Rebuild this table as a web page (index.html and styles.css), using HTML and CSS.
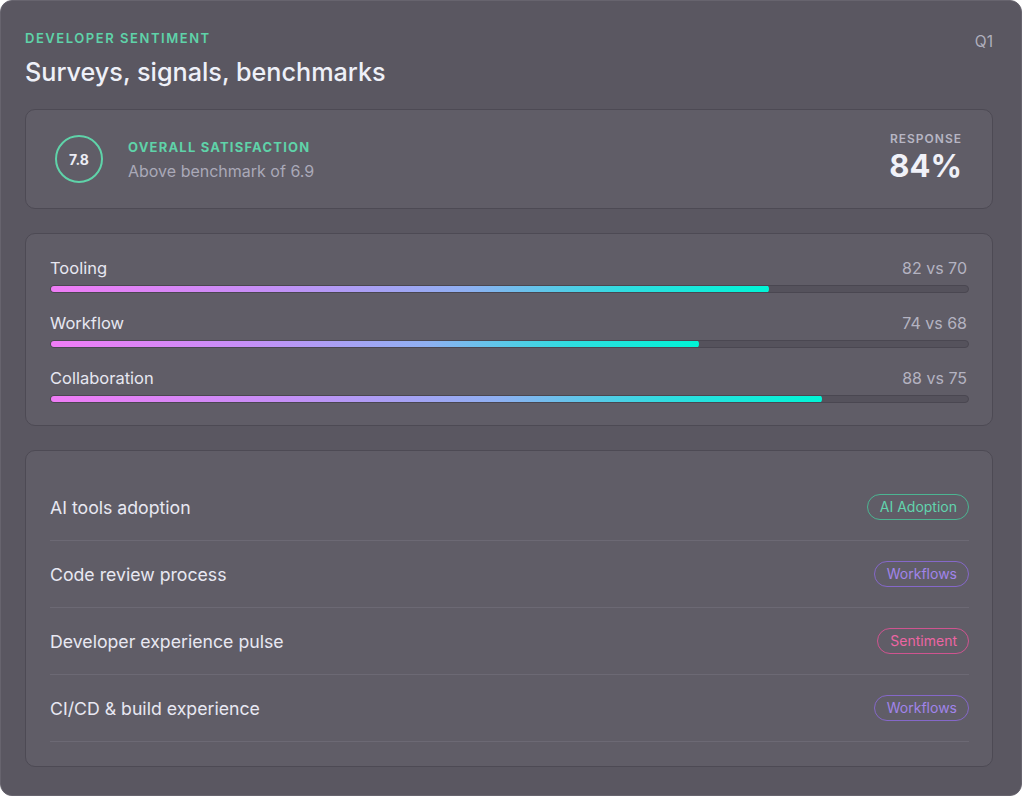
FILE: index.html
```html
<!DOCTYPE html>
<html lang="en">
<head>
<meta charset="utf-8">
<title>Developer Sentiment</title>
<link rel="stylesheet" href="styles.css">
</head>
<body>
<div class="panel">
  <header class="panel-head">
    <div>
      <div class="eyebrow">Developer Sentiment</div>
      <h1 class="title">Surveys, signals, benchmarks</h1>
    </div>
    <div class="period">Q1</div>
  </header>

  <section class="card summary">
    <div class="score">7.8</div>
    <div class="summary-text">
      <div class="summary-label">Overall Satisfaction</div>
      <div class="summary-sub">Above benchmark of 6.9</div>
    </div>
    <div class="response">
      <div class="response-label">Response</div>
      <div class="response-value">84%</div>
    </div>
  </section>

  <section class="card bars">
    <div class="bar-row">
      <div class="bar-head"><span class="bar-name">Tooling</span><span class="bar-val">82 vs 70</span></div>
      <div class="track"><div class="fill" style="width:78.4%"></div></div>
    </div>
    <div class="bar-row">
      <div class="bar-head"><span class="bar-name">Workflow</span><span class="bar-val">74 vs 68</span></div>
      <div class="track"><div class="fill" style="width:70.8%"></div></div>
    </div>
    <div class="bar-row">
      <div class="bar-head"><span class="bar-name">Collaboration</span><span class="bar-val">88 vs 75</span></div>
      <div class="track"><div class="fill" style="width:84.2%"></div></div>
    </div>
  </section>

  <section class="card list">
    <div class="list-row"><span class="list-name">AI tools adoption</span><span class="tag tag-teal">AI Adoption</span></div>
    <div class="list-row"><span class="list-name">Code review process</span><span class="tag tag-purple">Workflows</span></div>
    <div class="list-row"><span class="list-name">Developer experience pulse</span><span class="tag tag-pink">Sentiment</span></div>
    <div class="list-row"><span class="list-name">CI/CD &amp; build experience</span><span class="tag tag-purple">Workflows</span></div>
  </section>
</div>
</body>
</html>
```

FILE: styles.css
```css
* { box-sizing: border-box; }
html, body { margin: 0; padding: 0; background: #ffffff; }
body {
  font-family: Inter, "Noto Sans", "Liberation Sans", sans-serif;
  color: #e9e9f2;
}
.panel {
  width: 1022px;
  height: 796px;
  background: #5a5761;
  border: 1px solid #67646e;
  border-radius: 12px;
  padding: 29px 28px 0 24px;
  display: flex;
  flex-direction: column;
}
.panel-head {
  display: flex;
  justify-content: space-between;
  align-items: flex-start;
  margin-bottom: 22px;
}
.eyebrow {
  font-size: 13px;
  line-height: 16px;
  font-weight: 600;
  letter-spacing: 1.55px;
  text-transform: uppercase;
  color: #5fd3a9;
}
.title {
  margin: 11px 0 0;
  font-size: 25.2px;
  line-height: 30px;
  font-weight: 500;
  color: #eef0f8;
}
.period {
  font-size: 15.5px;
  line-height: 18px;
  color: #b0afbd;
  margin-top: 3px;
}
.card {
  background: #605d67;
  border: 1px solid #4d4a54;
  border-radius: 10px;
}
.summary {
  height: 100px;
  display: flex;
  align-items: center;
  padding: 0 30px 0 29px;
  margin-bottom: 24px;
}
.score {
  width: 48px;
  height: 48px;
  border-radius: 50%;
  border: 2px solid #5fd3a9;
  display: flex;
  align-items: center;
  justify-content: center;
  font-size: 14px;
  font-weight: 700;
  color: #ececf4;
  flex: none;
}
.summary-text {
  margin-left: 25px;
  margin-top: 2px;
  flex: 1;
}
.summary-label {
  font-size: 13px;
  line-height: 16px;
  font-weight: 700;
  letter-spacing: 1.2px;
  text-transform: uppercase;
  color: #5fd3a9;
}
.summary-sub {
  margin-top: 7px;
  font-size: 16px;
  line-height: 19px;
  color: #aaa9b8;
}
.response {
  text-align: right;
  margin-top: -2px;
}
.response-label {
  font-size: 12px;
  line-height: 14px;
  font-weight: 600;
  letter-spacing: 1px;
  text-transform: uppercase;
  color: #b7b6c4;
}
.response-value {
  margin-top: 2px;
  font-size: 31px;
  line-height: 36px;
  font-weight: 700;
  color: #f0f1f8;
}
.bars {
  padding: 24px 23px 22px 24px;
  display: flex;
  flex-direction: column;
  gap: 20px;
  margin-bottom: 24px;
}
.bar-head {
  display: flex;
  justify-content: space-between;
  align-items: center;
  height: 20px;
  margin-bottom: 7px;
  padding-right: 2px;
}
.bar-name {
  font-size: 16.5px;
  color: #e7e7f1;
}
.bar-val {
  font-size: 16px;
  color: #b4b3c1;
}
.track {
  height: 8px;
  border-radius: 4px;
  background: #55525c;
  border: 1px solid #4a4751;
  overflow: hidden;
}
.fill {
  margin: -1px 0 0 -1px;
  height: 8px;
  border-radius: 4px;
  background: linear-gradient(90deg, #f07cf6 0%, #c68ff7 30%, #8fb0f2 58%, #2fdde0 80%, #00f5d6 100%);
}
.list {
  padding: 23px 23px 0 24px;
  height: 317px;
}
.list-row {
  height: 67px;
  display: flex;
  align-items: center;
  justify-content: space-between;
  border-bottom: 1px solid #6c6974;
}
.list-name {
  font-size: 17.7px;
  color: #e8e8f2;
}
.tag {
  height: 26px;
  padding: 0 11px 0 12px;
  border-radius: 13px;
  border: 1.5px solid;
  font-size: 14px;
  line-height: 23px;
  font-weight: 400;
}
.tag-teal { color: #62d4ad; border-color: #4cb592; }
.tag-purple { color: #a184ea; border-color: #8568c9; }
.tag-pink { color: #ec65a3; border-color: #cf5490; }
```
